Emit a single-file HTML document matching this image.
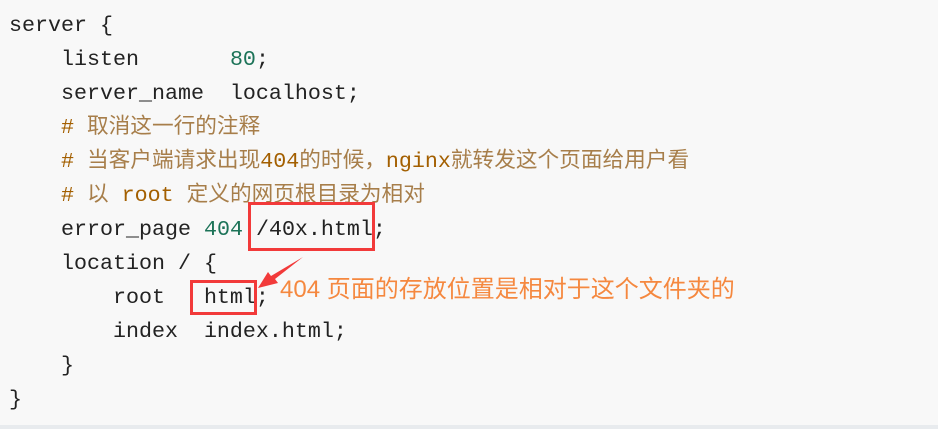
<!DOCTYPE html>
<html><head><meta charset="utf-8"><style>
html,body{margin:0;padding:0}
body{width:938px;height:429px;background:#f8f8f8;position:relative;overflow:hidden;border-bottom:0}
.bar{position:absolute;left:0;top:425px;width:938px;height:4px;background:#e8ebee}
.l{position:absolute;left:9px;white-space:pre;font-family:"Liberation Mono","Noto Sans CJK SC",monospace;font-size:21.67px;line-height:34px;color:#222}
.n{color:#1c7358}
.c{color:#a77e4a}
.cb{color:#a35f00}
.box{position:absolute;border:3px solid #f23a3a;box-sizing:border-box}
.note{position:absolute;left:280px;top:275px;font-family:"Liberation Sans","Noto Sans CJK SC",sans-serif;font-size:24px;color:#f5883f;white-space:nowrap;line-height:30px}
</style></head><body>
<div class="l" style="top:9px">server {</div>
<div class="l" style="top:43px">    listen       <span class="n">80</span>;</div>
<div class="l" style="top:77px">    server_name  localhost;</div>
<div class="l" style="top:111px">    <span class="cb">#</span> <span class="c">取消这一行的注释</span></div>
<div class="l" style="top:145px">    <span class="cb">#</span> <span class="c">当客户端请求出现</span><span class="cb">404</span><span class="c">的时候，</span><span class="cb">nginx</span><span class="c">就转发这个页面给用户看</span></div>
<div class="l" style="top:179px">    <span class="cb">#</span> <span class="c">以</span> <span class="cb">root</span> <span class="c">定义的网页根目录为相对</span></div>
<div class="l" style="top:213px">    error_page <span class="n">404</span> /40x.html;</div>
<div class="l" style="top:247px">    location / {</div>
<div class="l" style="top:281px">        root   html;</div>
<div class="l" style="top:315px">        index  index.html;</div>
<div class="l" style="top:349px">    }</div>
<div class="l" style="top:383px">}</div>
<div class="box" style="left:248px;top:202px;width:127px;height:49px"></div>
<div class="box" style="left:190px;top:280px;width:67px;height:35px"></div>
<svg style="position:absolute;left:0;top:0" width="938" height="429">
<polygon points="303,257 275,279 278,283 258,288 268,272 271,276" fill="#f23a3a"/>
</svg>
<div class="note">404 页面的存放位置是相对于这个文件夹的</div>
<div class="bar"></div>
</body></html>
